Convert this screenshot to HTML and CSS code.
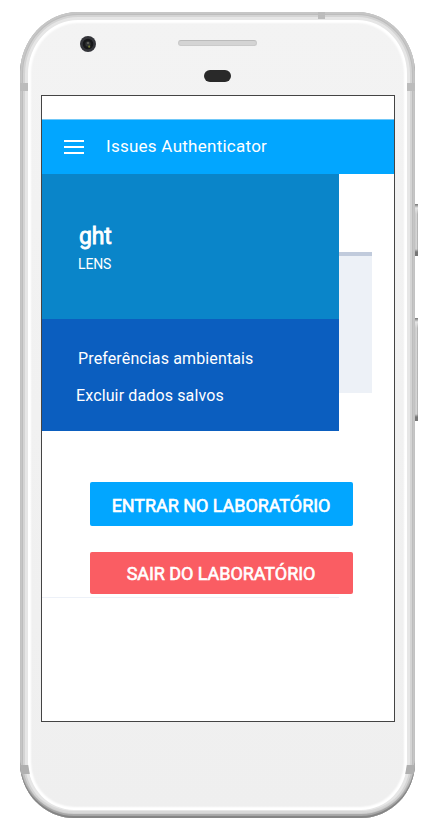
FILE: index.html
```html
<!DOCTYPE html>
<html lang="pt-BR">
<head>
<meta charset="utf-8">
<title>Issues Authenticator</title>
<link rel="stylesheet" href="styles.css">
</head>
<body>
<div class="phone">
  <i class="side-button power"></i>
  <i class="side-button volume"></i>
  <div class="shell">
    <i class="band band-top"></i>
    <i class="band band-left"></i>
    <i class="band band-right"></i>
    <i class="band band-left low"></i>
    <i class="band band-right low"></i>
  </div>
  <svg class="camera" viewBox="0 0 16 16"><circle cx="8" cy="8" r="8" fill="#34353a"/><circle cx="8" cy="8" r="5.3" fill="#161719"/><circle cx="8" cy="8" r="2.7" fill="#303232"/><circle cx="8" cy="7" r="1.1" fill="#65665f"/><circle cx="9.2" cy="10.7" r="1.1" fill="#737b35"/></svg>
  <i class="speaker"></i>
  <i class="sensor"></i>
  <main class="screen">
    <header class="bar">
      <svg class="menu" viewBox="0 0 20 14"><path d="M0 1h20M0 7h20M0 13h20" stroke="#fff" stroke-width="2"/></svg>
      <h1>Issues Authenticator</h1>
    </header>
    <div class="upper">
      <nav class="drawer">
        <section class="profile"><h2>ght</h2><p>LENS</p></section>
        <ul class="links"><li>Preferências ambientais</li><li class="clear">Excluir dados salvos</li></ul>
      </nav>
      <div class="card"></div>
    </div>
    <div class="actions">
      <button class="enter"><span>ENTRAR NO LABORATÓRIO</span></button>
      <button class="leave"><span>SAIR DO LABORATÓRIO</span></button>
    </div>
    <div class="divider"></div>
  </main>
</div>
</body>
</html>
```
FILE: styles.css
```css
* { box-sizing: border-box; }
body { margin: 0; background: #fff; font-family: Roboto, sans-serif; color: #fff; }
h1, h2, p, ul { margin: 0; padding: 0; list-style: none; font-weight: 400; }
.phone { position: relative; width: 395px; height: 806px; margin: 12px 0 0 20px; padding: 83px 0 0 21px; }
.shell {
  position: absolute; inset: 0; overflow: hidden;
  border-radius: 58px 58px 54px 54px / 62px 62px 56px 56px;
  background: linear-gradient(#f3f3f3, #efefef);
  box-shadow: inset 0 -2px #858585, inset 0 -4px 1px #a6a6a6, inset 0 0 0 2px #c6c6c6, inset 0 0 0 3px #bdbdbd, inset 0 0 0 5px #d4d4d4, inset 0 -7px #d8d8d8, inset 0 0 0 8px #e6e6e6, inset 0 0 2px 11px #fff;
}
.band { position: absolute; background: #bcbcbc; }
.band-top { left: 298px; top: 0; width: 7px; height: 7px; }
.band-left { left: 0; top: 71px; width: 8px; height: 8px; }
.band-right { right: 0; top: 71px; width: 8px; height: 8px; }
.low { top: 753px; width: 9px; height: 9px; background: #b0b0b0; }
.band-left.low { transform: skewX(10deg); }
.band-right.low { transform: skewX(-10deg); }
.side-button { position: absolute; right: -3px; width: 4px; background: linear-gradient(#777, #e5e5e5 4px, transparent 10px, transparent calc(100% - 7px), #777 calc(100% - 4px)), linear-gradient(90deg, #bbb, #d8d8d8 60%, #a6a6a6); }
.power { top: 192px; height: 52px; }
.volume { top: 306px; height: 103px; }
.camera { position: absolute; left: 60px; top: 24px; width: 16px; height: 16px; }
.speaker { position: absolute; left: 158px; top: 28px; width: 79px; height: 6px; border-radius: 3px; background: #d4d4d4; border: 1px solid #cacaca; border-top-color: #bbb; }
.sensor { position: absolute; left: 184px; top: 58px; width: 27px; height: 12px; border-radius: 6px; background: #292929; }
.screen { position: relative; width: 354px; height: 627px; padding-top: 23px; border: 1px solid #444; background: #fff; }
.bar { display: flex; align-items: center; height: 55px; padding-left: 22px; border-top: 1px solid #70c8f8; background: #02a6ff; }
.menu { width: 20px; height: 14px; margin-right: 22px; }
h1 { margin-top: -2px; font-size: 17px; line-height: 20px; letter-spacing: .26px; }
.upper { display: flex; align-items: flex-start; }
.drawer { width: 297px; }
.profile { height: 145px; padding: 49px 0 0 37px; background: #0a85c9; }
h2 { font-size: 23px; line-height: 28px; letter-spacing: -.2px; -webkit-text-stroke: .8px #fff; }
.profile p { margin: 4px 0 0 -1px; font-size: 14px; line-height: 18px; letter-spacing: -.15px; }
.links { height: 112px; padding: 29px 0 0 36px; background: #0b5ebf; font-size: 16px; line-height: 22px; letter-spacing: .13px; }
.clear { margin: 15px 0 0 -2px; }
.card { width: 33px; height: 141px; margin-top: 78px; border-top: 4px solid #c1cbdc; background: #edf1f7; }
.actions { display: flex; flex-direction: column; gap: 26px; padding: 51px 0 0 47.5px; }
button { width: 263px; height: 44px; padding: 3px 0 0; border: 0; border-radius: 2px; background: #02a6ff; color: #fff; font: 18px/22px Roboto, sans-serif; letter-spacing: -.05px; -webkit-text-stroke: .6px #fff; }
.leave { height: 42px; padding-top: 2px; background: #fa5d63; }
.divider { width: 297px; height: 1px; margin-top: 3px; background: #edf1f8; }
```
